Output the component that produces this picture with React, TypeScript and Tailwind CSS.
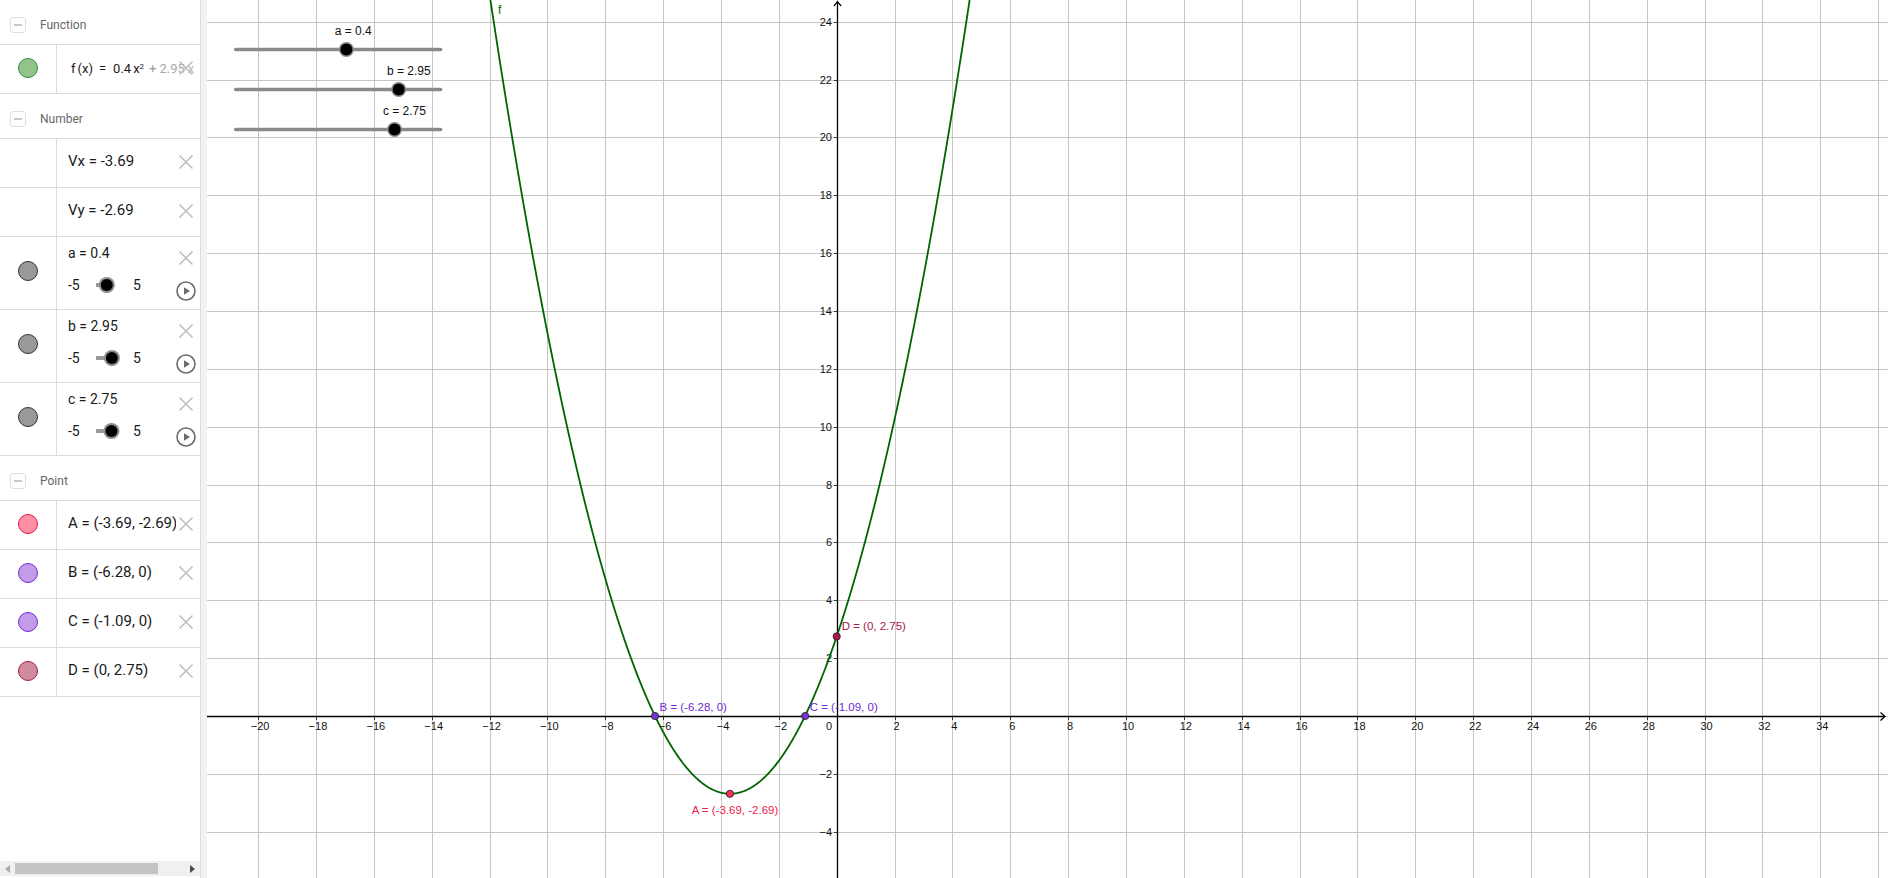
import React from 'react';

// graph geometry (local to the graphics view, which starts at x=207)
const GW = 1681;
const GH = 878;
const OX = 629.7;
const OY = 716;
const S = 28.93;

const sx = (x: number) => OX + x * S;
const sy = (y: number) => OY - y * S;
const f = (x: number) => 0.4 * x * x + 2.95 * x + 2.75;
const px = (v: number) => Math.round(v) + 0.5;

function curvePath() {
    const pts: string[] = [];
    for (let x = -12.2; x <= 4.76; x += 0.02) {
        pts.push(`${sx(x).toFixed(2)},${sy(f(x)).toFixed(2)}`);
    }
    return 'M' + pts.join('L');
}

const range = (a: number, b: number, step: number) => {
    const out: number[] = [];
    for (let v = a; v <= b; v += step) out.push(v);
    return out;
};

const fmt = (n: number) => (n < 0 ? '\u2212' + Math.abs(n) : String(n));

function DeleteIcon() {
    return (
        <svg width="16" height="16" viewBox="0 0 16 16" className="block">
            <path d="M1.5 1.5L14.5 14.5M14.5 1.5L1.5 14.5" stroke="#bdbdbd" strokeWidth="1.5" fill="none" />
        </svg>
    );
}

function PlayIcon() {
    return (
        <svg width="20" height="20" viewBox="0 0 20 20" className="mt-[15px] block">
            <circle cx="10" cy="10" r="9" stroke="#6b6b6b" strokeWidth="1.6" fill="none" />
            <path d="M8 6.3L14 10L8 13.7Z" fill="#6b6b6b" />
        </svg>
    );
}

function Header({ label }: { label: string }) {
    return (
        <div className="flex h-[45px] shrink-0 items-center border-b border-[#dcdcdc] pl-[10px] pt-[5px]">
            <div className="flex h-[16px] w-[16px] items-center justify-center rounded-[3px] border border-[#e0e0e0]">
                <div className="h-[2px] w-[8px] bg-[#c9c9c9]" />
            </div>
            <span className="ml-[14px] text-[12px] text-[#666]">{label}</span>
        </div>
    );
}

function Row({ swatch, children, wide }: { swatch?: string; children: React.ReactNode; wide?: boolean }) {
    return (
        <div className="flex h-[49px] shrink-0 border-b border-[#dcdcdc]">
            <div className="flex w-[57px] shrink-0 items-center justify-center border-r border-[#dcdcdc] pb-[2px]">
                {swatch && <span className={`block h-[20px] w-[20px] rounded-full border ${swatch}`} />}
            </div>
            <div className="flex min-w-0 flex-1 items-center pb-[3px] pl-[11px]">
                <div
                    className={`min-w-0 flex-1 whitespace-nowrap text-[#1a1a1a] ${wide ? '-mr-[24px] pl-[3px] pt-[2px] text-[13px]' : 'overflow-hidden text-[15px]'}`}
                >
                    {children}
                </div>
                <div className="relative mr-[4px] flex w-[20px] shrink-0 justify-center">
                    <DeleteIcon />
                </div>
            </div>
        </div>
    );
}

function SliderRow({ name, value, frac }: { name: string; value: string; frac: number }) {
    const knob = 6 + frac * 20;
    return (
        <div className="flex h-[73px] shrink-0 border-b border-[#dcdcdc]">
            <div className="flex w-[57px] shrink-0 items-center justify-center border-r border-[#dcdcdc] pb-[4px]">
                <span className="block h-[20px] w-[20px] rounded-full border border-[#333] bg-[#999]" />
            </div>
            <div className="flex min-w-0 flex-1 pl-[11px]">
                <div className="flex flex-1 flex-col pt-[6px] text-[14px] text-[#1a1a1a]">
                    <div className="h-[20px] leading-[20px]">
                        {name} = {value}
                    </div>
                    <div className="mt-[12px] flex h-[20px] items-center leading-[20px]">
                        <span className="w-[22px]">-5</span>
                        <svg width="36" height="18" viewBox="0 0 36 18" className="block">
                            <line x1="6" y1="9" x2={knob} y2="9" stroke="#9a9a9a" strokeWidth="4" />
                            <circle cx={knob} cy="9" r="8" fill="#8d8d8d" />
                            <circle cx={knob} cy="9" r="6" fill="#000" />
                        </svg>
                        <span className="pl-[7px]">5</span>
                    </div>
                </div>
                <div className="mr-[4px] flex w-[20px] shrink-0 flex-col items-center pt-[13px]">
                    <DeleteIcon />
                    <PlayIcon />
                </div>
            </div>
        </div>
    );
}

function GraphSlider({ y, frac, label }: { y: number; frac: number; label: string }) {
    const x1 = 28.7;
    const x2 = 233.7;
    const kx = x1 + frac * (x2 - x1);
    return (
        <g>
            <line x1={x1} y1={y} x2={x2} y2={y} stroke="#8a8a8a" strokeWidth="3.5" strokeLinecap="round" />
            <circle cx={kx} cy={y} r="7.5" fill="#8a8a8a" />
            <circle cx={kx} cy={y} r="6" fill="#000" />
            <text x={kx - 11.7} y={y - 15} fontSize="12" fill="#111">
                {label}
            </text>
        </g>
    );
}

function Graph() {
    const xs = range(-20, 36, 2);
    const ys = range(-4, 24, 2);
    const ax = px(OX);
    const ay = px(OY);
    const pts = [
        { x: -3.69, y: -2.69, fill: '#ff2e56', color: '#ef1a48', label: 'A = (-3.69, -2.69)', dx: -38.3, dy: 20.5 },
        { x: -6.28, y: 0, fill: '#7534d8', color: '#7028d8', label: 'B = (-6.28, 0)', dx: 4.5, dy: -5 },
        { x: -1.09, y: 0, fill: '#7534d8', color: '#7028d8', label: 'C = (-1.09, 0)', dx: 4.5, dy: -5 },
        { x: 0, y: 2.75, fill: '#b0164b', color: '#a8174a', label: 'D = (0, 2.75)', dx: 5, dy: -6 },
    ];
    return (
        <svg width={GW} height={GH} className="block font-['Liberation_Sans',Arial,sans-serif]">
            {/* grid */}
            {xs.map((k) => (
                <line key={'gx' + k} x1={px(sx(k))} y1={0} x2={px(sx(k))} y2={GH} stroke="#c6c6c6" strokeWidth="1" />
            ))}
            {ys.map((k) => (
                <line key={'gy' + k} x1={0} y1={px(sy(k))} x2={GW} y2={px(sy(k))} stroke="#c6c6c6" strokeWidth="1" />
            ))}

            {/* axes */}
            <line x1={0} y1={ay} x2={GW - 3} y2={ay} stroke="#000" strokeWidth="1.3" />
            <line x1={ax} y1={1.5} x2={ax} y2={GH} stroke="#000" strokeWidth="1.3" />
            <path d={`M${GW - 7.5} ${ay - 4}L${GW - 3} ${ay}L${GW - 7.5} ${ay + 4}`} stroke="#000" strokeWidth="1.2" fill="none" />
            <path d={`M${ax - 3.6} 6L${ax} 1.6L${ax + 3.6} 6`} stroke="#000" strokeWidth="1.2" fill="none" />

            {/* ticks and labels */}
            {xs
                .filter((k) => k !== 0 && k <= 34)
                .map((k) => (
                    <g key={'lx' + k}>
                        <line x1={px(sx(k))} y1={ay} x2={px(sx(k))} y2={ay + 3.5} stroke="#333" strokeWidth="1" />
                        <text x={sx(k) + 2} y={730} fontSize="11" textAnchor="middle" fill="#111">
                            {fmt(k)}
                        </text>
                    </g>
                ))}
            {ys
                .filter((k) => k !== 0)
                .map((k) => (
                    <g key={'ly' + k}>
                        <line x1={ax - 3.5} y1={px(sy(k))} x2={ax} y2={px(sy(k))} stroke="#333" strokeWidth="1" />
                        <text x={ax - 5.5} y={sy(k) + 4} fontSize="11" textAnchor="end" fill="#111">
                            {fmt(k)}
                        </text>
                    </g>
                ))}
            <text x={ax - 5.5} y={730} fontSize="11" textAnchor="end" fill="#111">
                0
            </text>

            {/* function */}
            <path d={curvePath()} stroke="#006400" strokeWidth="1.8" fill="none" strokeLinejoin="round" />
            <text x={291} y={14} fontSize="12" fill="#006400">
                f
            </text>

            {/* points */}
            {pts.map((p) => (
                <g key={p.label}>
                    <circle cx={sx(p.x)} cy={sy(p.y)} r="3.6" fill={p.fill} stroke="#222" strokeWidth="0.9" />
                    <text x={sx(p.x) + p.dx} y={sy(p.y) + p.dy} fontSize="11.5" fill={p.color}>
                        {p.label}
                    </text>
                </g>
            ))}

            {/* sliders on the canvas */}
            <GraphSlider y={49.5} frac={0.54} label="a = 0.4" />
            <GraphSlider y={89.5} frac={0.795} label="b = 2.95" />
            <GraphSlider y={129.5} frac={0.775} label="c = 2.75" />
        </svg>
    );
}

export default function App() {
    return (
        <div className="flex h-[878px] w-[1888px] overflow-hidden bg-white font-['Roboto','Liberation_Sans',sans-serif]">
            {/* algebra view */}
            <aside className="flex h-full w-[201px] shrink-0 flex-col overflow-hidden border-r border-[#dcdcdc]">
                <Header label="Function" />
                <Row swatch="bg-[#93c48c] border-[#3a8a3a]" wide>
                    <span>f</span>
                    <span className="ml-[2px]">(x)</span>
                    <span className="ml-[6px]">=</span>
                    <span className="ml-[7px]">0.4</span>
                    <span className="ml-[2px]">x</span>
                    <sup className="text-[8px]">2</sup>
                    <span className="ml-[5px] text-[#9c9c9c]">+</span>
                    <span className="ml-[3px] text-[#a8a8a8]">2.95</span>
                    <span className="ml-[3px] text-[#b8b8b8]">x</span>
                </Row>
                <Header label="Number" />
                <Row>Vx = -3.69</Row>
                <Row>Vy = -2.69</Row>
                <SliderRow name="a" value="0.4" frac={0.54} />
                <SliderRow name="b" value="2.95" frac={0.795} />
                <SliderRow name="c" value="2.75" frac={0.775} />
                <Header label="Point" />
                <Row swatch="bg-[#ff8fa2] border-[#e4194b]">A = (-3.69, -2.69)</Row>
                <Row swatch="bg-[#c39be9] border-[#6f2bd4]">B = (-6.28, 0)</Row>
                <Row swatch="bg-[#c39be9] border-[#6f2bd4]">C = (-1.09, 0)</Row>
                <Row swatch="bg-[#d08c9e] border-[#a51c4a]">D = (0, 2.75)</Row>
                <div className="flex-1" />
                {/* horizontal scrollbar */}
                <div className="mb-[2px] flex h-[15px] shrink-0 items-center bg-[#f0f0f0]">
                    <span className="ml-[5px] h-0 w-0 border-y-[4px] border-r-[5px] border-y-transparent border-r-[#a9a9a9]" />
                    <span className="ml-[5px] h-[11px] w-[143px] bg-[#c4c4c4]" />
                    <span className="ml-auto mr-[5px] h-0 w-0 border-y-[4px] border-l-[5px] border-y-transparent border-l-[#4a4a4a]" />
                </div>
            </aside>
            <div className="w-[6px] shrink-0 bg-[#f3f3f3]" />
            {/* graphics view */}
            <main className="min-w-0 flex-1">
                <Graph />
            </main>
        </div>
    );
}
